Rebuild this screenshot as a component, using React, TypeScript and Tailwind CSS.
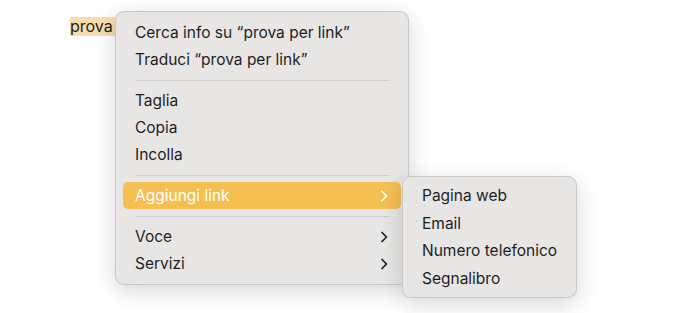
import React from 'react'

type Item = { label: string; sub?: boolean; active?: boolean } | 'sep'

const mainItems: Item[] = [
  { label: 'Cerca info su “prova per link”' },
  { label: 'Traduci “prova per link”' },
  'sep',
  { label: 'Taglia' },
  { label: 'Copia' },
  { label: 'Incolla' },
  'sep',
  { label: 'Aggiungi link', sub: true, active: true },
  'sep',
  { label: 'Voce', sub: true },
  { label: 'Servizi', sub: true },
]

const linkItems = ['Pagina web', 'Email', 'Numero telefonico', 'Segnalibro']

function Chevron({ light }: { light?: boolean }) {
  return (
    <svg width="8" height="12" viewBox="0 0 8 12" className={light ? 'text-white' : 'text-[#1f1f1f]'}>
      <polyline points="2,1.5 6.5,6 2,10.5" fill="none" stroke="currentColor" strokeWidth="1.7" strokeLinecap="round" strokeLinejoin="round" />
    </svg>
  )
}

export default function App() {
  return (
    <div className="relative h-[313px] w-[700px] overflow-hidden bg-white font-['Inter','Liberation_Sans',sans-serif] text-[15.5px] text-[#1e1e1e]">
      <span className="absolute left-[70px] top-[17px] bg-[#f6dcae] pr-[2px] text-[16px] leading-[19px]">prova</span>

      <div className="absolute left-[115px] top-[11px] w-[294px] rounded-[9px] border border-[#c9c8c7] bg-[#e7e6e5] py-[7px] shadow-[0_6px_22px_rgba(0,0,0,0.16)]">
        {mainItems.map((it, i) =>
          it === 'sep' ? (
            <div key={i} className="flex h-[14px] items-center px-[19px]">
              <div className="h-px w-full bg-[#cfcecd]" />
            </div>
          ) : (
            <div
              key={i}
              className={`mx-[7px] flex h-[27px] items-center justify-between rounded-[5px] pl-[12px] pr-[13px] ${it.active ? 'bg-[#f5bf52] text-white' : ''}`}
            >
              <span>{it.label}</span>
              {it.sub && <Chevron light={it.active} />}
            </div>
          ),
        )}
      </div>

      <div className="absolute left-[402px] top-[176px] w-[175px] rounded-[9px] border border-[#c9c8c7] bg-[#e7e6e5] py-[5px] shadow-[0_6px_22px_rgba(0,0,0,0.16)]">
        {linkItems.map((l) => (
          <div key={l} className="mx-[7px] flex h-[27.5px] items-center pl-[12px]">
            {l}
          </div>
        ))}
      </div>
    </div>
  )
}
